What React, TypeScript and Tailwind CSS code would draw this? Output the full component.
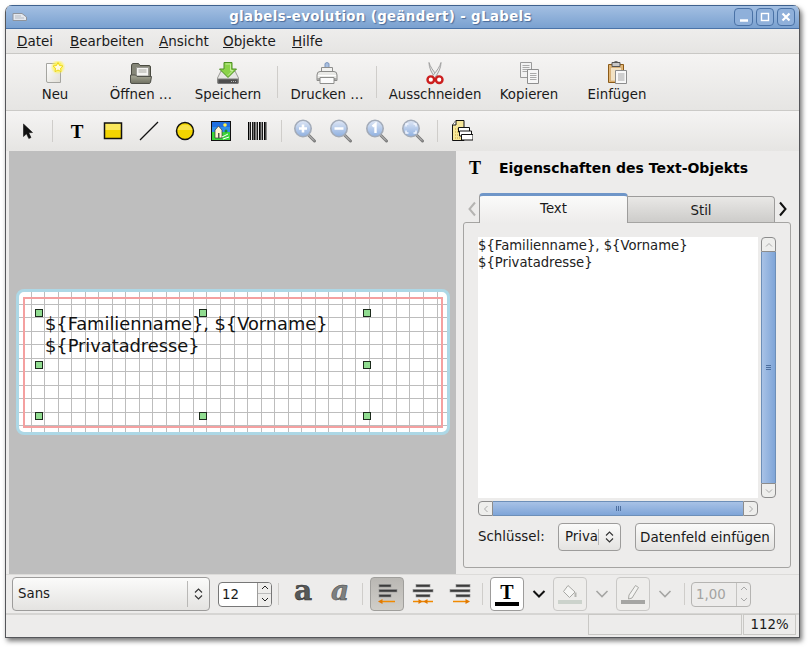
import React from "react";

function Ic({ w = 24, h = 24, children }: { w?: number; h?: number; children: React.ReactNode }) {
  return (
    <svg width={w} height={h} viewBox={`0 0 ${w} ${h}`} className="block shrink-0">
      {children}
    </svg>
  );
}

const NewIcon = () => (
  <Ic>
    <defs>
      <linearGradient id="pg" x1="0" y1="0" x2="1" y2="1">
        <stop offset="0" stopColor="#ffffff" />
        <stop offset="1" stopColor="#e0ded6" />
      </linearGradient>
      <radialGradient id="glow">
        <stop offset="0.5" stopColor="#fff45a" />
        <stop offset="1" stopColor="#fff45a" stopOpacity="0" />
      </radialGradient>
    </defs>
    <path d="M3.5 2.5H17.5V21.5H5a1.5 1.5 0 0 1-1.5-1.5Z" fill="url(#pg)" stroke="#a5a5a0" />
    <circle cx="15" cy="6" r="7.5" fill="url(#glow)" />
    <path d="M15 1.5l1.5 3 3.4.5-2.4 2.3.6 3.3-3.1-1.6-3 1.6.6-3.3-2.5-2.3 3.4-.5Z" fill="#fffbe0" stroke="#e8d000" strokeWidth="0.8" />
  </Ic>
);
const OpenIcon = () => (
  <Ic>
    <defs>
      <linearGradient id="fo" x1="0" y1="0" x2="0" y2="1">
        <stop offset="0" stopColor="#a9aa98" />
        <stop offset="1" stopColor="#6f7061" />
      </linearGradient>
    </defs>
    <path d="M2.500 5Q2.500 2.500 4 2.500H9.500L11 4.500H20Q21.500 4.500 21.500 6V20H2.500Z" fill="#858678" stroke="#4a4b42" />
    <path d="M7.500 6.500H19.500V15H7.500Z" fill="#f4f4f2" stroke="#9a9a94" />
    <path d="M9.500 9H17.500M9.500 11H17.500" stroke="#a8a8a2" />
    <path d="M1.500 14H6.500L8 15.500H22.500L21.500 21.500Q21 22.500 20 22.500H3Q1.500 22.500 1.500 21Z" fill="url(#fo)" stroke="#50514a" />
  </Ic>
);
const SaveIcon = () => (
  <Ic>
    <path d="M5 10H19L22.500 17V22H1.500V17Z" fill="#e6e6e4" stroke="#9a9a96" />
    <path d="M2 18H22V22.500H2Z" fill="#4e4e4e" stroke="#7a7a7a" />
    <path d="M15 20.500H20" stroke="#bbbbbb" strokeDasharray="1 1" />
    <path d="M8 1.500H16V8H20.500L12 16.500L3.500 8H8Z" fill="#8bd34a" stroke="#4c8f22" />
    <path d="M9.500 3H14.500V9.500H17L12 14.500" fill="none" stroke="#c5ee9c" />
  </Ic>
);
const PrintIcon = () => (
  <Ic>
    <path d="M10 7.500V2.500Q12 0.500 14 2.500V7.500" fill="#a9c0e0" stroke="#7c95bd" />
    <path d="M6.500 6.500H17.500V11H6.500Z" fill="#f2f2f0" stroke="#8e8e8c" />
    <path d="M2 14Q2 10.500 5 10.500H19Q22 10.500 22 14V19.500H2Z" fill="#e9e9e6" stroke="#8a8a88" />
    <path d="M3 14.500H21" stroke="#ffffff" />
    <path d="M5 16.500H19V22.500H5Z" fill="#fbfbfb" stroke="#8e8e8c" />
    <path d="M2.500 18H5M19 18H21.500" stroke="#6e6e6c" />
  </Ic>
);
const CutIcon = () => (
  <Ic>
    <path d="M6 1.500Q7.500 7 14.500 15L12.500 17Q6 9 6 1.500Z" fill="#e7e7e7" stroke="#a2a2a2" />
    <path d="M18 1.500Q16.500 7 9.500 15L11.500 17Q18 9 18 1.500Z" fill="#ececec" stroke="#a2a2a2" />
    <circle cx="7.800" cy="18.700" r="3.300" fill="#fff" stroke="#cc1f1f" strokeWidth="2.400" />
    <circle cx="16.200" cy="18.700" r="3.300" fill="#fff" stroke="#cc1f1f" strokeWidth="2.400" />
  </Ic>
);
const CopyIcon = () => (
  <Ic>
    <path d="M3.500 1.500H14.500V16.500H3.500Z" fill="#f2f2f2" stroke="#9a9a9a" />
    <path d="M5.500 4.500H12.500M5.500 6.500H12.500M5.500 8.500H12.500M5.500 10.500H10" stroke="#a9a9a9" />
    <path d="M10.500 8.500H21.500V22.500H10.500Z" fill="#f6f6f6" stroke="#8e8e8e" />
    <path d="M13 12.500H19.500M13 14.500H19.500M13 16.500H19.500M13 18.500H19.500" stroke="#a9a9a9" />
  </Ic>
);
const PasteIcon = () => (
  <Ic>
    <path d="M3.500 3.500H18.500V21.500H3.500Z" fill="#e2b676" stroke="#8b5a17" />
    <path d="M7 1.500H15V5.500H7Z" fill="#c8c8c8" stroke="#555555" />
    <path d="M8.500 1.500Q11 -0.500 13.500 1.500" fill="none" stroke="#555" />
    <path d="M5.500 6.500H16.500V20H5.500Z" fill="#f2e2c4" stroke="#c9a063" strokeWidth="0.600" />
    <path d="M10.500 9.500H21.500V22.500H10.500Z" fill="#f8f8f8" stroke="#8c8c8c" />
    <path d="M13 13H19.500M13 15H19.500M13 17H19.500M13 19H19.500" stroke="#a5a5a5" />
  </Ic>
);

const ArrowTool = () => (
  <Ic w={16} h={18}>
    <path d="M3.500 2V14.500L6.500 11.800L8.800 16.500L11 15.500L8.700 10.800L12.500 10.500Z" fill="#111" stroke="#111" strokeWidth="0.600" />
  </Ic>
);
const RectTool = () => (
  <Ic w={20} h={18}>
    <rect x="2" y="1" width="16" height="15" fill="#f3d400" />
    <rect x="2" y="1" width="16" height="7" fill="#fbe85c" />
    <rect x="1.500" y="1" width="17" height="15.500" fill="none" stroke="#111" strokeWidth="1.500" />
  </Ic>
);
const LineTool = () => (
  <Ic w={20} h={20}>
    <path d="M1 19L19 1" stroke="#111" strokeWidth="1.300" />
  </Ic>
);
const EllipseTool = () => (
  <Ic w={20} h={20}>
    <circle cx="10" cy="10" r="8.500" fill="#f2d500" stroke="#111" strokeWidth="1.500" />
    <path d="M2.500 9A8 8 0 0 1 17.500 9Z" fill="#f8e34a" />
  </Ic>
);
const ImageTool = () => (
  <Ic w={20} h={20}>
    <rect x="0.500" y="0.500" width="19" height="19" fill="#2f8fe8" stroke="#111" />
    <rect x="1" y="1" width="18" height="5" fill="#1f6fe0" />
    <rect x="1" y="11" width="18" height="8" fill="#3ad43a" />
    <circle cx="14" cy="4" r="1.800" fill="#ffef4a" />
    <path d="M4 17V9L7.500 5L11 9V17Z" fill="#fff7d4" stroke="#333" strokeWidth="0.700" />
    <path d="M7 17V12H8.500V17Z" fill="#555" />
    <path d="M11 16L17 13M12 18L18 16" stroke="#fff" />
    <circle cx="15" cy="10" r="1.500" fill="#1f8f2a" />
  </Ic>
);
const BarcodeTool = () => (
  <Ic w={20} h={18}>
    {[1, 3, 5, 6.500, 8.500, 10, 12, 13.500, 15, 17, 18.500].map((x, i) => (
      <rect key={i} x={x} y="0" width={i % 3 === 0 ? 1.400 : 0.900} height="18" fill="#000" />
    ))}
  </Ic>
);
function ZoomIcon({ g }: { g: React.ReactNode }) {
  return (
    <Ic>
      <defs>
        <linearGradient id="zg" x1="0" y1="0" x2="0" y2="1">
          <stop offset="0" stopColor="#dfe7f5" />
          <stop offset="1" stopColor="#8fb0e0" />
        </linearGradient>
      </defs>
      <path d="M15 15.500L21.500 22" stroke="#7d7d7d" strokeWidth="3" strokeLinecap="round" />
      <path d="M15.500 16L21 21.500" stroke="#c9c9c9" strokeWidth="1" />
      <circle cx="10" cy="9.500" r="8.200" fill="url(#zg)" stroke="#a3abb8" strokeWidth="1.600" />
      {g}
    </Ic>
  );
}
const ZIn = () => <ZoomIcon g={<path d="M6 9.500H14M10 5.500V13.500" stroke="#fff" strokeWidth="2.600" />} />;
const ZOut = () => <ZoomIcon g={<path d="M5.500 9.500H14.500" stroke="#fff" strokeWidth="2.600" />} />;
const ZOne = () => <ZoomIcon g={<path d="M7.500 7.500L10.500 5V14" fill="none" stroke="#fff" strokeWidth="2.400" />} />;
const ZFit = () => (
  <ZoomIcon
    g={<path d="M5 7.500V5H7.500M12.500 5H15V7.500M15 11.500V14H12.500M7.500 14H5V11.500" fill="none" stroke="#f2f6ff" strokeWidth="1.500" />}
  />
);
const MergeIcon = () => (
  <Ic>
    <path d="M3.500 6L7 1.500H15V21.500H3.500Z" fill="#f6e79a" stroke="#111" />
    <path d="M3.500 6H7V1.500" fill="#fff" stroke="#111" />
    <path d="M6 10H12M6 13H12M6 16H12M6 19H12" stroke="#c5a23a" strokeDasharray="1 1" />
    <path d="M9.500 8.500H20.500V13H9.500Z" fill="#fff" stroke="#111" />
    <path d="M10.500 12H22.500V17H10.500Z" fill="#fff" stroke="#111" />
    <path d="M12.500 15.500H24V21H12.500Z" fill="#fff" stroke="#111" />
  </Ic>
);

const Sep = ({ h = "h-[32px]" }: { h?: string }) => <div className={`w-px bg-[#cfcdca] ${h}`} />;

function U({ f, r }: { f: string; r: string }) {
  return (
    <span className="text-[13.500px]">
      <span className="underline">{f}</span>
      {r}
    </span>
  );
}

function TB({ w, label, icon }: { w: string; label: string; icon: React.ReactNode }) {
  return (
    <div className={`flex flex-col items-center gap-[2px] ${w}`}>
      {icon}
      <span className="leading-[16px] whitespace-nowrap">{label}</span>
    </div>
  );
}

function T2({ children, w = "w-[36px]" }: { children: React.ReactNode; w?: string }) {
  return <div className={`flex items-center justify-center ${w}`}>{children}</div>;
}

const Chevron = ({ c = "#111", sw = 2 }: { c?: string; sw?: number }) => (
  <Ic w={14} h={10}>
    <path d="M1.500 2L7 7.500L12.500 2" fill="none" stroke={c} strokeWidth={sw} />
  </Ic>
);

const UpDown = ({ c = "#333" }: { c?: string }) => (
  <Ic w={9} h={14}>
    <path d="M1 5.500L4.500 2L8 5.500M1 8.500L4.500 12L8 8.500" fill="none" stroke={c} strokeWidth="1.100" />
  </Ic>
);

function AlignIcon({ a }: { a: "l" | "c" | "r" }) {
  const rows =
    a === "l"
      ? [[4, 16], [4, 22], [4, 16]]
      : a === "c"
      ? [[5, 19], [2, 22], [5, 19]]
      : [[8, 22], [2, 22], [8, 22]];
  return (
    <Ic>
      {rows.map(([x1, x2], i) => (
        <rect key={i} x={x1} y={2.5 + i * 5} width={x2 - x1} height="2.500" fill="#3b3b3b" stroke="#8f8f8f" strokeWidth="0.600" />
      ))}
      {a === "l" && (
        <>
          <path d="M7 19.500H20" stroke="#f08a00" strokeWidth="1.500" />
          <path d="M3 19.500L7.500 17V22Z" fill="#e07800" />
        </>
      )}
      {a === "c" && (
        <>
          <path d="M2 19.500H22" stroke="#f08a00" strokeWidth="1.500" />
          <path d="M11.500 19.500L7.500 17V22ZM12.500 19.500L16.500 17V22Z" fill="#e07800" />
        </>
      )}
      {a === "r" && (
        <>
          <path d="M5 19.500H18" stroke="#f08a00" strokeWidth="1.500" />
          <path d="M22 19.500L17.500 17V22Z" fill="#e07800" />
        </>
      )}
    </Ic>
  );
}

const serifT = "font-['Liberation_Serif',serif] font-bold";

function VScroll() {
  return (
    <div className="flex flex-col w-[15px] h-[261px]">
      <div className="h-[15px] border border-[#8c8c8c] rounded-t-[4px] bg-[#eeeeec] flex items-center justify-center">
        <Ic w={8} h={6}>
          <path d="M1 4.500L4 1.500L7 4.500" fill="none" stroke="#aaa" />
        </Ic>
      </div>
      <div className="flex-1 border-x border-[#6d8fb8] bg-gradient-to-r from-[#a8c2e6] to-[#7fa5d8] flex items-center justify-center">
        <div className="flex flex-col gap-[1px]">
          <div className="w-[5px] h-px bg-[#4d6f9f]" />
          <div className="w-[5px] h-px bg-[#4d6f9f]" />
          <div className="w-[5px] h-px bg-[#4d6f9f]" />
        </div>
      </div>
      <div className="h-[15px] border border-[#8c8c8c] rounded-b-[4px] bg-[#eeeeec] flex items-center justify-center">
        <Ic w={8} h={6}>
          <path d="M1 1.500L4 4.500L7 1.500" fill="none" stroke="#aaa" />
        </Ic>
      </div>
    </div>
  );
}

function HScroll() {
  return (
    <div className="flex h-[15px] w-[280px]">
      <div className="w-[15px] border border-[#8c8c8c] rounded-l-[4px] bg-[#eeeeec] flex items-center justify-center">
        <Ic w={6} h={8}>
          <path d="M4.500 1L1.500 4L4.500 7" fill="none" stroke="#aaa" />
        </Ic>
      </div>
      <div className="flex-1 border-y border-[#6d8fb8] bg-gradient-to-b from-[#a8c2e6] to-[#7fa5d8] flex items-center justify-center">
        <div className="flex gap-[1px]">
          <div className="h-[5px] w-px bg-[#4d6f9f]" />
          <div className="h-[5px] w-px bg-[#4d6f9f]" />
          <div className="h-[5px] w-px bg-[#4d6f9f]" />
        </div>
      </div>
      <div className="w-[15px] border border-[#8c8c8c] rounded-r-[4px] bg-[#eeeeec] flex items-center justify-center">
        <Ic w={6} h={8}>
          <path d="M1.500 1L4.500 4L1.500 7" fill="none" stroke="#aaa" />
        </Ic>
      </div>
    </div>
  );
}

function Handle({ l, t }: { l: number; t: number }) {
  return (
    <div className="absolute w-[8px] h-[8px] bg-[#90dc90] border border-[#1c2a1c]" style={{ left: l, top: t }} />
  );
}

function LabelCanvas() {
  const vs = Array.from({ length: 31 }, (_, i) => Math.round(11.6 + i * 13.53) + 0.5);
  const hs = Array.from({ length: 10 }, (_, i) => Math.round(11.5 + i * 13.52) + 0.5);
  return (
    <div className="absolute left-[7px] top-[138px] w-[434px] h-[146px] rounded-[8px] border-[3px] border-[#add8e6] bg-white">
      <svg width="428" height="140" className="absolute left-0 top-0">
        {vs.map((x, i) => (
          <line key={i} x1={x} x2={x} y1="0" y2="140" stroke="#bdbdbd" />
        ))}
        {hs.map((y, i) => (
          <line key={i} y1={y} y2={y} x1="0" x2="428" stroke="#bdbdbd" />
        ))}
      </svg>
      <div className="absolute left-[4px] top-[5px] w-[420px] h-[131px] border-2 border-[#f4a0a0]" />
      <div className="absolute left-[26px] top-[21px] text-[17.800px] leading-[21.500px] text-[#111] whitespace-nowrap">
        <div>{"${Familienname}, ${Vorname}"}</div>
        <div>{"${Privatadresse}"}</div>
      </div>
      {[16, 180, 344].map((l) =>
        [17, 69, 120].map((t) => (l === 180 && t === 69 ? null : <Handle key={`${l}${t}`} l={l} t={t} />))
      )}
    </div>
  );
}

const pushBtn = "border border-[#9d9c9b] rounded-[4px] bg-gradient-to-b from-[#fbfbfa] to-[#e4e3e1]";

export default function App() {
  return (
    <div className="w-[810px] h-[648px] bg-white pl-[5px] pt-[5px] font-['DejaVu_Sans',sans-serif] text-[13.330px] text-[#1a1a1a] overflow-hidden">
      <div className="w-[795px] h-[633px] flex flex-col rounded-t-[7px] border-x border-b border-[#55565a] bg-[#edeceb] shadow-[2px_3px_5px_rgba(0,0,0,0.55)] overflow-hidden">
        {/* title bar */}
        <div className="relative h-[24px] shrink-0 flex items-center justify-center pr-[44px] bg-gradient-to-b from-[#a3bfe2] to-[#7aa1d0] border-b border-[#4a73a8] border-t border-t-[#3e618e]">
          <div className="absolute left-[6px] top-[6px]">
            <Ic w={16} h={10}>
              <path d="M1 1.500H10L14.500 5V8.500H1Z" fill="#e4e8ee" stroke="#8f949c" />
              <path d="M3 4H9M3 6H12" stroke="#b5bac2" />
            </Ic>
          </div>
          <span className="font-bold text-white tracking-[0.37px] [text-shadow:1px_1px_1px_#4a6b99]">
            glabels-evolution (geändert) - gLabels
          </span>
          <div className="absolute right-[4px] top-[2px] flex gap-[3px]">
            {[
              <path key="a" d="M5 12.500H13" stroke="#fff" strokeWidth="2.400" />,
              <rect key="b" x="5.500" y="5.500" width="7" height="7" fill="none" stroke="#fff" strokeWidth="1.400" />,
              <path key="c" d="M5.500 5.500L12.500 12.500M12.500 5.500L5.500 12.500" stroke="#fff" strokeWidth="2.200" />,
            ].map((g, i) => (
              <div key={i} className={`h-[18px] rounded-[4px] border border-[#4a72a6] bg-[#8fb0da] flex items-center justify-center ${i === 0 ? "w-[19px]" : "w-[18px]"}`}>
                <Ic w={16} h={16}>
                  <g transform="translate(-1 -1)">{g}</g>
                </Ic>
              </div>
            ))}
          </div>
        </div>
        {/* menu */}
        <div className="h-[25px] shrink-0 flex items-center pl-[11px] gap-[15px] bg-gradient-to-b from-[#eeedec] to-[#e6e5e3] border-b border-[#c9c8c5]">
          <div className="w-[38px]"><U f="D" r="atei" /></div>
          <div className="w-[74px]"><U f="B" r="earbeiten" /></div>
          <div className="w-[49px]"><U f="A" r="nsicht" /></div>
          <div className="w-[54px]"><U f="O" r="bjekte" /></div>
          <div><U f="H" r="ilfe" /></div>
        </div>
        {/* main toolbar */}
        <div className="h-[57px] shrink-0 flex items-center pl-[6px] bg-gradient-to-b from-[#f5f4f3] to-[#e6e5e3] border-b border-[#cbcac7]">
          <TB w="w-[86px]" label="Neu" icon={<NewIcon />} />
          <TB w="w-[86px]" label="Öffnen …" icon={<OpenIcon />} />
          <TB w="w-[88px]" label="Speichern" icon={<SaveIcon />} />
          <div className="w-[10px] flex justify-center"><Sep /></div>
          <TB w="w-[90px]" label="Drucken …" icon={<PrintIcon />} />
          <div className="w-[9px] flex justify-center"><Sep /></div>
          <TB w="w-[108px]" label="Ausschneiden" icon={<CutIcon />} />
          <TB w="w-[80px]" label="Kopieren" icon={<CopyIcon />} />
          <TB w="w-[96px]" label="Einfügen" icon={<PasteIcon />} />
        </div>
        {/* tools toolbar */}
        <div className="h-[40px] shrink-0 flex items-center pl-[4px] bg-gradient-to-b from-[#f5f4f3] to-[#e6e5e3]">
          <T2><ArrowTool /></T2>
          <div className="w-[13px] flex justify-center"><Sep h="h-[22px]" /></div>
          <T2><span className={`${serifT} text-[19px] text-black leading-none`}>T</span></T2>
          <T2><RectTool /></T2>
          <T2><LineTool /></T2>
          <T2><EllipseTool /></T2>
          <T2><ImageTool /></T2>
          <T2><BarcodeTool /></T2>
          <div className="w-[12px] flex justify-center"><Sep h="h-[22px]" /></div>
          <T2><ZIn /></T2>
          <T2><ZOut /></T2>
          <T2><ZOne /></T2>
          <T2><ZFit /></T2>
          <div className="w-[12px] flex justify-center"><Sep h="h-[22px]" /></div>
          <T2><MergeIcon /></T2>
        </div>
        {/* centre */}
        <div className="flex-1 flex min-h-0 pl-[3px] bg-[#edeceb]">
          <div className="relative w-[447px] bg-[#bebebe]">
            <LabelCanvas />
          </div>
          <div className="flex-1 flex flex-col pl-[8px] min-w-0">
            <div className="h-[34px] flex items-center pl-[4px] shrink-0">
              <span className={`${serifT} text-[18px] text-black w-[31px] leading-none pl-[1px]`}>T</span>
              <span className="font-bold text-black text-[14px]">Eigenschaften des Text-Objekts</span>
            </div>
            <div className="flex items-end h-[34px] mt-[3px] shrink-0 relative">
              <div className="w-[15px] h-[26px] flex items-center justify-center">
                <Ic w={10} h={16}>
                  <path d="M8 1.500L2.500 8L8 14.500" fill="none" stroke="#b5b4b2" strokeWidth="2" />
                </Ic>
              </div>
              <div className="w-[149px] h-[30px] -mb-px z-10 relative rounded-t-[4px] border-x border-[#9d9c9b] border-t-[3px] border-t-[#6f96c8] bg-gradient-to-b from-[#fbfbfa] to-[#edeceb] flex items-center justify-center pb-[2px]">
                Text
              </div>
              <div className="w-[147px] h-[26px] rounded-tr-[4px] border-t border-r border-[#9d9c9b] bg-gradient-to-b from-[#e9e8e6] to-[#cdccca] flex items-center justify-center pt-[2px]">
                Stil
              </div>
              <div className="w-[16px] h-[26px] flex items-center justify-center">
                <Ic w={10} h={16}>
                  <path d="M2 1.500L7.500 8L2 14.500" fill="none" stroke="#111" strokeWidth="2" />
                </Ic>
              </div>
            </div>
            <div className="h-[346px] w-[328px] -ml-[1px] shrink-0 border border-[#a5a4a2] rounded-[3px] bg-[#edeceb] px-[14px] pt-[14px]">
              <div className="flex gap-[3px]">
                <div className="w-[280px] h-[261px] bg-white leading-[17px] text-[13.200px] text-[#222]">
                  <div>{"${Familienname}, ${Vorname}"}</div>
                  <div>{"${Privatadresse}"}</div>
                </div>
                <VScroll />
              </div>
              <div className="mt-[3px]"><HScroll /></div>
              <div className="flex items-center mt-[7px] h-[28px]">
                <span className="w-[80px]">Schlüssel:</span>
                <div className={`${pushBtn} w-[63px] h-[28px] flex items-center pl-[6px]`}>
                  <span className="w-[34px] border-r border-[#b9b8b6] h-[16px] leading-[16px] shrink-0 whitespace-nowrap">Priva</span>
                  <div className="flex-1 flex justify-center"><UpDown /></div>
                </div>
                <div className={`${pushBtn} ml-[14px] w-[140px] h-[28px] flex items-center justify-center whitespace-nowrap text-[13.500px]`}>
                  Datenfeld einfügen
                </div>
              </div>
            </div>
          </div>
        </div>
        {/* format toolbar */}
        <div className="h-[41px] shrink-0 flex items-center pl-[6px] bg-[#edeceb] border-t border-[#dcdbd9] border-b-[2px] border-b-[#d6d5d3]">
          <div className={`${pushBtn} w-[198px] h-[34px] flex items-center pl-[5px]`}>
            <span className="flex-1">Sans</span>
            <div className="w-[22px] h-[26px] border-l border-[#b9b8b6] flex items-center justify-center"><UpDown /></div>
          </div>
          <div className="ml-[8px] w-[54px] h-[25px] rounded-[4px] border border-[#777] bg-white flex overflow-hidden">
            <span className="flex-1 pl-[3px] leading-[23px]">12</span>
            <div className="w-[14px] border-l border-[#9d9c9b] bg-[#eeedeb] flex flex-col">
              <div className="h-1/2 flex items-center justify-center border-b border-[#bbb]">
                <Ic w={8} h={5}><path d="M1 4L4 1L7 4" fill="none" stroke="#222" /></Ic>
              </div>
              <div className="h-1/2 flex items-center justify-center">
                <Ic w={8} h={5}><path d="M1 1L4 4L7 1" fill="none" stroke="#222" /></Ic>
              </div>
            </div>
          </div>
          <div className="w-[12px] flex justify-center"><Sep h="h-[22px]" /></div>
          <div className="w-[38px] flex justify-center">
            <span className="font-['DejaVu_Serif',serif] font-bold text-[28px] leading-none text-[#565959] [-webkit-text-stroke:0.5px_#2e2e2e] -mt-[7px]">a</span>
          </div>
          <div className="w-[36px] flex justify-center">
            <span className="font-['DejaVu_Serif',serif] font-bold italic text-[28px] leading-none text-[#7d8080] [-webkit-text-stroke:0.5px_#444] -mt-[7px]">a</span>
          </div>
          <div className="w-[8px] flex justify-center"><Sep h="h-[22px]" /></div>
          <div className="ml-[4px] w-[34px] h-[34px] shrink-0 rounded-[4px] border border-[#a09f9c] bg-gradient-to-b from-[#b9b7b3] to-[#d0cec9] flex items-center justify-center"><AlignIcon a="l" /></div>
          <div className="w-[38px] flex justify-center"><AlignIcon a="c" /></div>
          <div className="w-[35px] flex justify-center"><AlignIcon a="r" /></div>
          <div className="w-[10px] flex justify-center"><Sep h="h-[22px]" /></div>
          <div className="ml-[3px] w-[34px] h-[34px] rounded-[4px] border border-[#9d9c9b] bg-white flex flex-col items-center justify-center">
            <span className={`${serifT} text-[20px] leading-[18px] text-black`}>T</span>
            <div className="w-[24px] h-[4px] bg-black mt-[1px]" />
          </div>
          <div className="w-[29px] flex justify-center"><Chevron /></div>
          <div className="w-[34px] h-[34px] rounded-[4px] border border-[#c9c8c6] bg-[#eeedeb] flex flex-col items-center justify-center">
            <Ic w={18} h={16}>
              <path d="M7 1.500L14 8L8.500 13.500L2.500 7.500Z" fill="#f6f6f4" stroke="#a8a8a4" />
              <path d="M14.500 8.500V13" stroke="#b5b5b0" strokeWidth="2" />
            </Ic>
            <div className="w-[24px] h-[4px] bg-[#ccd3cc]" />
          </div>
          <div className="w-[29px] flex justify-center"><Chevron c="#a5a5a3" sw={1.600} /></div>
          <div className="w-[34px] h-[34px] rounded-[4px] border border-[#c9c8c6] bg-[#eeedeb] flex flex-col items-center justify-center">
            <Ic w={18} h={16}>
              <path d="M11.500 1.500L14.500 3.500L8 14L4.500 15L5 11Z" fill="#f3f3f1" stroke="#a8a8a4" />
            </Ic>
            <div className="w-[24px] h-[4px] bg-[#a5a5a3]" />
          </div>
          <div className="w-[29px] flex justify-center"><Chevron c="#a5a5a3" sw={1.600} /></div>
          <div className="w-[10px] flex justify-center"><Sep h="h-[22px]" /></div>
          <div className="ml-[2px] w-[60px] h-[25px] rounded-[4px] border border-[#b5b4b2] flex overflow-hidden text-[#a3a3a1]">
            <span className="flex-1 pl-[4px] leading-[23px]">1,00</span>
            <div className="w-[14px] border-l border-[#c5c4c2] flex flex-col">
              <div className="h-1/2 flex items-center justify-center">
                <Ic w={8} h={5}><path d="M1 4L4 1L7 4" fill="none" stroke="#aaa" /></Ic>
              </div>
              <div className="h-1/2 flex items-center justify-center">
                <Ic w={8} h={5}><path d="M1 1L4 4L7 1" fill="none" stroke="#aaa" /></Ic>
              </div>
            </div>
          </div>
        </div>
        {/* status */}
        <div className="h-[22px] shrink-0 flex justify-end pr-[3px] bg-[#edeceb]">
          <div className="w-[154px] h-[21px] -mt-px border border-[#c9c8c5]" />
          <div className="w-[53px] h-[21px] -mt-px border border-[#c9c8c5] flex items-center justify-center ml-[1px]">112%</div>
        </div>
      </div>
    </div>
  );
}
